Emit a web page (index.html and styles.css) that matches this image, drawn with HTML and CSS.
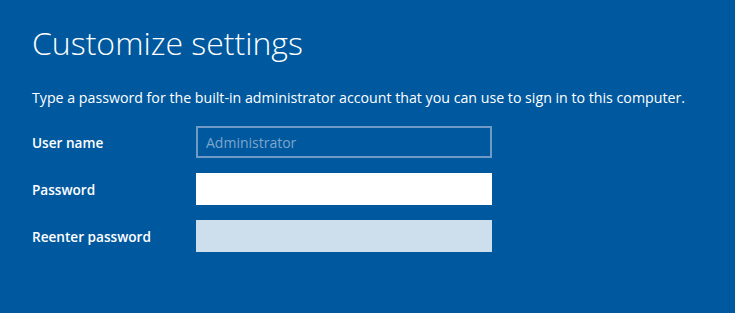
FILE: index.html
```html
<!DOCTYPE html>
<html lang="en">
<head>
  <meta charset="UTF-8">
  <title>Customize settings</title>
  <link rel="stylesheet" href="styles.css">
</head>
<body>

  <!-- Encabezado -->
  <h1 class="titulo">Customize settings</h1>
  <p class="descripcion">Type a password for the built-in administrator account that you can use to sign in to this computer.</p>

  <!-- Formulario -->
  <form class="formulario">
    <label class="etiqueta" for="usuario">User name</label>
    <input class="campo campo-deshabilitado" id="usuario" type="text" placeholder="Administrator" disabled>

    <label class="etiqueta" for="clave">Password</label>
    <input class="campo" id="clave" type="password">

    <label class="etiqueta" for="clave2">Reenter password</label>
    <input class="campo campo-inactivo" id="clave2" type="password">
  </form>

</body>
</html>
```

FILE: styles.css
```css
body {
  margin: 0;
  padding: 20px 32px;
  background-color: #00599f;
  color: #ffffff;
  font-family: 'Open Sans', 'Noto Sans', sans-serif;
  height: 100vh;
  box-sizing: border-box;
  overflow: hidden;
}

.titulo {
  margin: 0;
  font-size: 32px;
  font-weight: 300;
  line-height: 46px;
}

.descripcion {
  margin: 22px 0 0;
  font-size: 14.2px;
  line-height: 20px;
}

.formulario {
  margin-top: 18px;
  display: grid;
  grid-template-columns: 164px 296px;
  row-gap: 15px;
  align-items: center;
}

.etiqueta {
  font-size: 13.6px;
  font-weight: 600;
}

.campo {
  height: 32px;
  box-sizing: border-box;
  border: none;
  margin: 0;
  padding: 0 9px;
  background-color: #ffffff;
  font-family: inherit;
  font-size: 14px;
}

.campo-deshabilitado {
  background-color: transparent;
  border: 2px solid #6f9bc6;
  padding: 0 8px;
}

.campo-deshabilitado::placeholder {
  color: #7fa5cb;
}

.campo-inactivo {
  background-color: #cddeec;
}
```
